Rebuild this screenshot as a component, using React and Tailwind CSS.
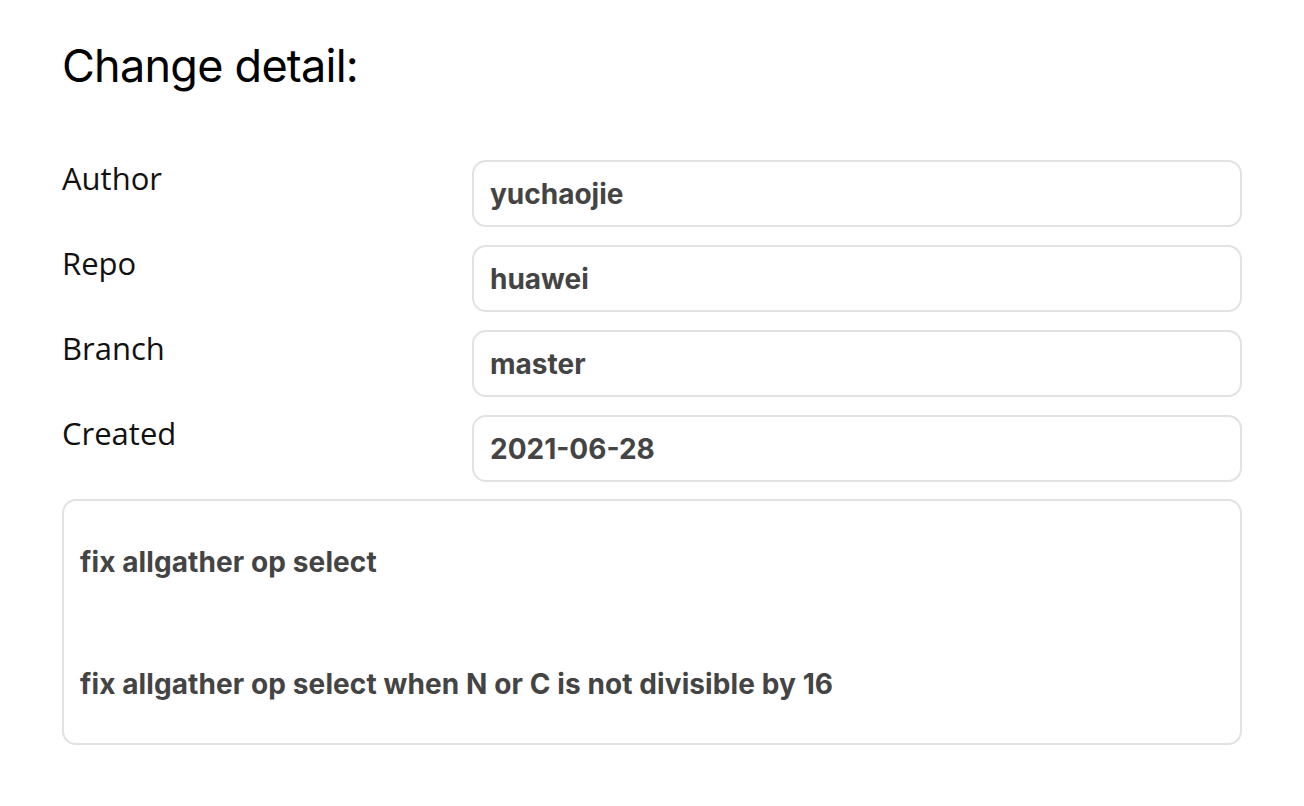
export default function App() {
  const rows = [
    ["Author", "yuchaojie"],
    ["Repo", "huawei"],
    ["Branch", "master"],
    ["Created", "2021-06-28"],
  ];
  return (
    <div className="min-h-[806px] w-[1304px] bg-white px-[62px] pt-[38px]" style={{ fontFamily: "Inter, 'Noto Sans', sans-serif" }}>
      <h1 className="text-[45px] leading-[56px] font-normal text-black tracking-[-0.75px]">Change detail:</h1>
      <div className="mt-[66px] flex flex-col gap-[18px]">
        {rows.map(([label, value]) => (
          <div key={label} className="flex">
            <div className="w-[410px] text-[31px] leading-[36px] text-[#111]" style={{ fontFamily: "'Open Sans', 'Noto Sans', sans-serif" }}>
              {label}
            </div>
            <div className="flex h-[67px] flex-1 items-center rounded-[14px] border-2 border-[#e2e2e2] px-[16px] text-[28px] font-bold text-[#444]">
              {value}
            </div>
          </div>
        ))}
      </div>
      <div className="mt-[17px] h-[246px] rounded-[14px] border-2 border-[#e2e2e2] px-[16px] pt-[41px] text-[28px] font-bold leading-[40px] text-[#444] tracking-[0.1px]">
        <p>fix allgather op select</p>
        <p className="mt-[82px]">fix allgather op select when N or C is not divisible by 16</p>
      </div>
    </div>
  );
}
